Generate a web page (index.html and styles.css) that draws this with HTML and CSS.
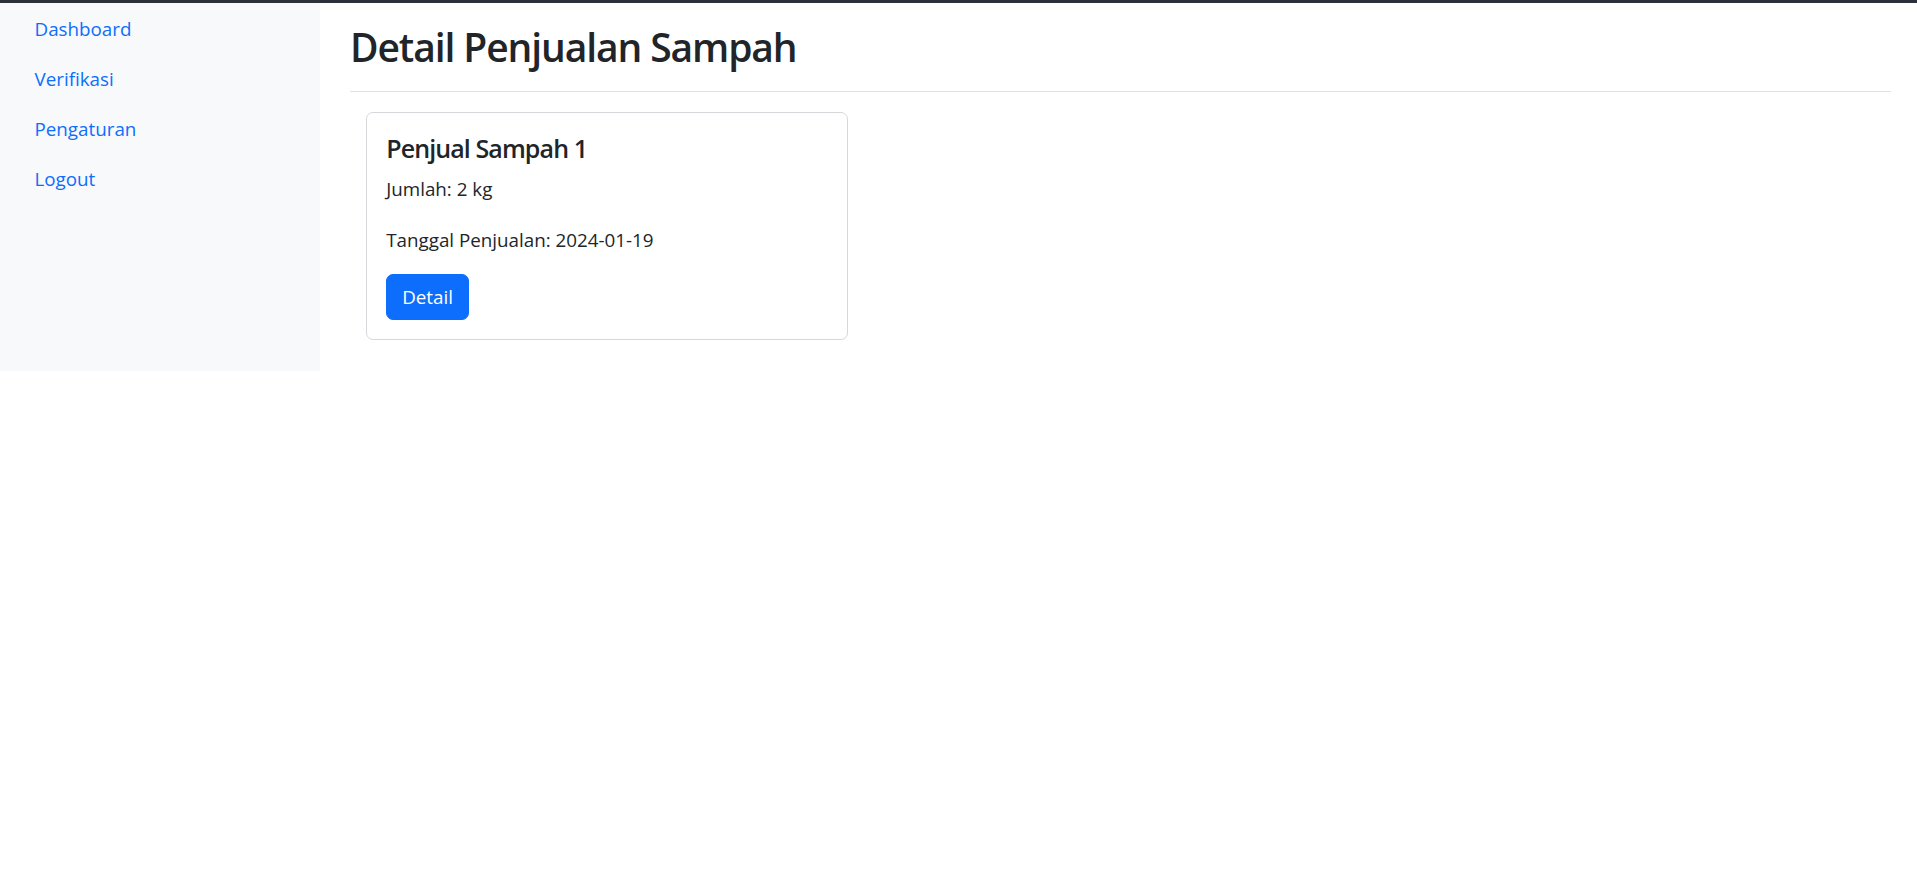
FILE: index.html
```html
<!DOCTYPE html>
<html lang="id">
<head>
<meta charset="utf-8">
<title>Detail Penjualan Sampah</title>
<link rel="stylesheet" href="styles.css">
</head>
<body>
<div class="topbar"></div>
<div class="layout">
  <nav class="sidebar">
    <ul class="nav">
      <li><a class="nav-link" href="#">Dashboard</a></li>
      <li><a class="nav-link" href="#">Verifikasi</a></li>
      <li><a class="nav-link" href="#">Pengaturan</a></li>
      <li><a class="nav-link" href="#">Logout</a></li>
    </ul>
  </nav>
  <main class="main">
    <div class="page-header">
      <h1 class="page-title">Detail Penjualan Sampah</h1>
    </div>
    <div class="cards">
      <div class="card">
        <div class="card-body">
          <h4 class="card-title">Penjual Sampah 1</h4>
          <p class="card-text">Jumlah: 2 kg</p>
          <p class="card-text">Tanggal Penjualan: 2024-01-19</p>
          <a class="btn" href="#">Detail</a>
        </div>
      </div>
    </div>
  </main>
</div>
</body>
</html>
```

FILE: styles.css
```css
* { box-sizing: border-box; }
html, body { margin: 0; padding: 0; }
body {
  font-family: "Open Sans", "Noto Sans", sans-serif;
  font-size: 18.8px;
  line-height: 28.8px;
  color: #212529;
  background: #ffffff;
}
.topbar {
  height: 3px;
  background: #2b303b;
}
.layout {
  display: flex;
  align-items: flex-start;
}
.sidebar {
  width: 320px;
  flex: 0 0 320px;
  height: 368px;
  background: #f8f9fa;
  padding-top: 1px;
}
.nav {
  list-style: none;
  margin: 0;
  padding: 0;
  display: flex;
  flex-direction: column;
}
.nav-link {
  display: block;
  padding: 10.6px 16px 10.6px 34.5px;
  color: #0d6efd;
  text-decoration: none;
}
.main {
  flex: 1 1 auto;
  padding: 0 26px 0 30px;
}
.page-header {
  padding: 20.2px 0 19.8px;
  border-bottom: 1px solid #dee2e6;
}
.page-title {
  margin: 0;
  font-size: 39px;
  line-height: 48px;
  font-weight: 600;
  letter-spacing: -1.1px;
  color: #212529;
}
.cards {
  display: flex;
  padding: 20.5px 0 0 16px;
}
.card {
  width: 482px;
  border: 1px solid #d6d8db;
  border-radius: 7px;
  background: #fff;
}
.card-body {
  padding: 19.2px;
  display: flex;
  flex-direction: column;
  align-items: flex-start;
}
.card-title {
  margin: 0 0 11.9px;
  font-size: 25px;
  line-height: 30.6px;
  font-weight: 600;
  letter-spacing: -0.9px;
  color: #212529;
}
.card-text {
  margin: 0 0 22px;
}
.card-text + .card-text {
  margin-bottom: 19.2px;
}
.btn {
  display: block;
  padding: 7px 15px;
  line-height: 30px;
  border: 1px solid #0d6efd;
  border-radius: 7px;
  background: #0d6efd;
  color: #ffffff;
  text-decoration: none;
}
```
